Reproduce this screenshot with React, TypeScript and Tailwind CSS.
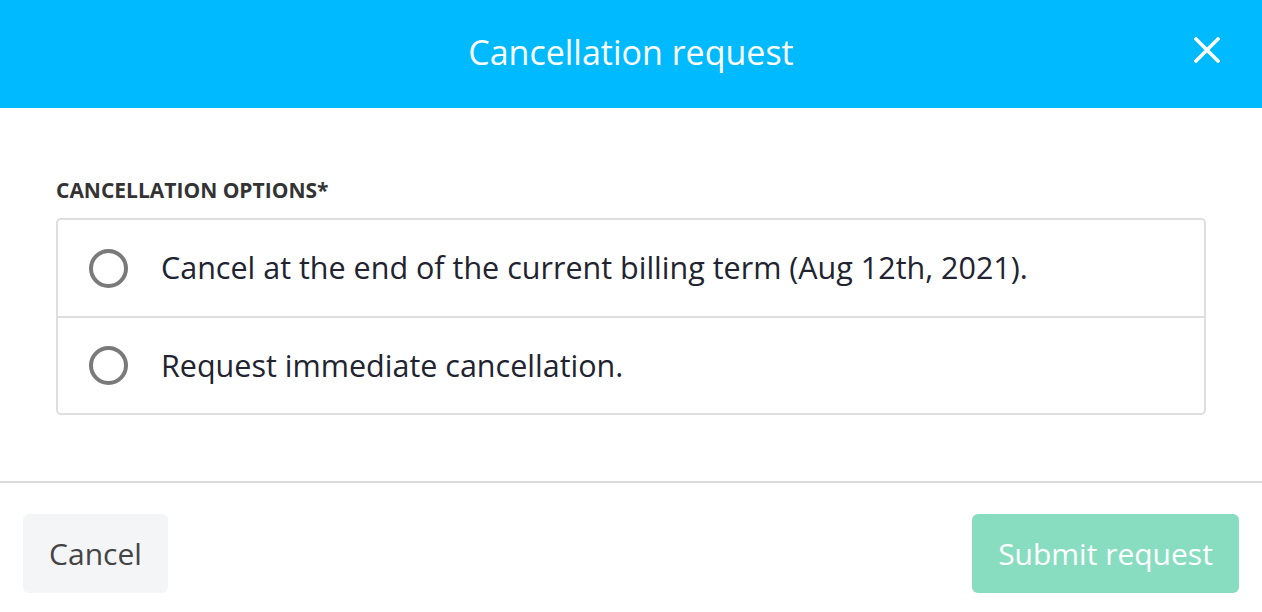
import React, { useState } from 'react';

const options = [
    { id: 'end', label: 'Cancel at the end of the current billing term (Aug 12th, 2021).' },
    { id: 'now', label: 'Request immediate cancellation.' },
];

export default function App() {
    const [choice, setChoice] = useState<string | null>(null);

    return (
        <div className="w-[1262px] h-[612px] bg-white flex flex-col overflow-hidden" style={{ fontFamily: '"Open Sans", "Noto Sans", sans-serif' }}>
            {/* header */}
            <div className="h-[108px] shrink-0 bg-[#00baff] flex items-center justify-center relative">
                <h1 className="text-[34px] leading-[40px] text-white font-normal -mt-[4px]">Cancellation request</h1>
                <button className="absolute right-[42px] top-[37px] w-[26px] h-[26px] text-white">
                    <svg viewBox="0 0 26 26" className="w-[26px] h-[26px]" fill="none" stroke="currentColor" strokeWidth="3.5" strokeLinecap="square">
                        <path d="M2 2 L24 24 M24 2 L2 24" />
                    </svg>
                </button>
            </div>

            {/* body */}
            <div className="px-[56px] pt-[69px] pb-[66px] border-b-2 border-[#dcdcdc]">
                <div className="text-[21px] font-bold text-[#333] uppercase leading-[26px] mb-[15px]">Cancellation options*</div>
                <div className="border-2 border-[#dedede] rounded-[5px]">
                    {options.map((o, i) => (
                        <label key={o.id} onClick={() => setChoice(o.id)} className={`flex items-center gap-[33px] px-[31px] cursor-pointer ${i > 0 ? 'h-[97px] border-t-2 border-[#dedede]' : 'h-[96px]'}`}>
                            <span className="w-[39px] h-[39px] rounded-full border-[4px] border-[#7a7a7a] flex items-center justify-center shrink-0">
                                {choice === o.id && <span className="w-[17px] h-[17px] rounded-full bg-[#7a7a7a]" />}
                            </span>
                            <span className="text-[30.5px] text-[#212330]">{o.label}</span>
                        </label>
                    ))}
                </div>
            </div>

            {/* footer */}
            <div className="flex items-center justify-between px-[23px] pt-[31px]">
                <button className="w-[145px] h-[79px] rounded-[6px] bg-[#f4f5f7] text-[30px] text-[#444]">Cancel</button>
                <button className="w-[267px] h-[79px] rounded-[6px] bg-[#88ddc0] text-[30px] text-white">Submit request</button>
            </div>
        </div>
    );
}
